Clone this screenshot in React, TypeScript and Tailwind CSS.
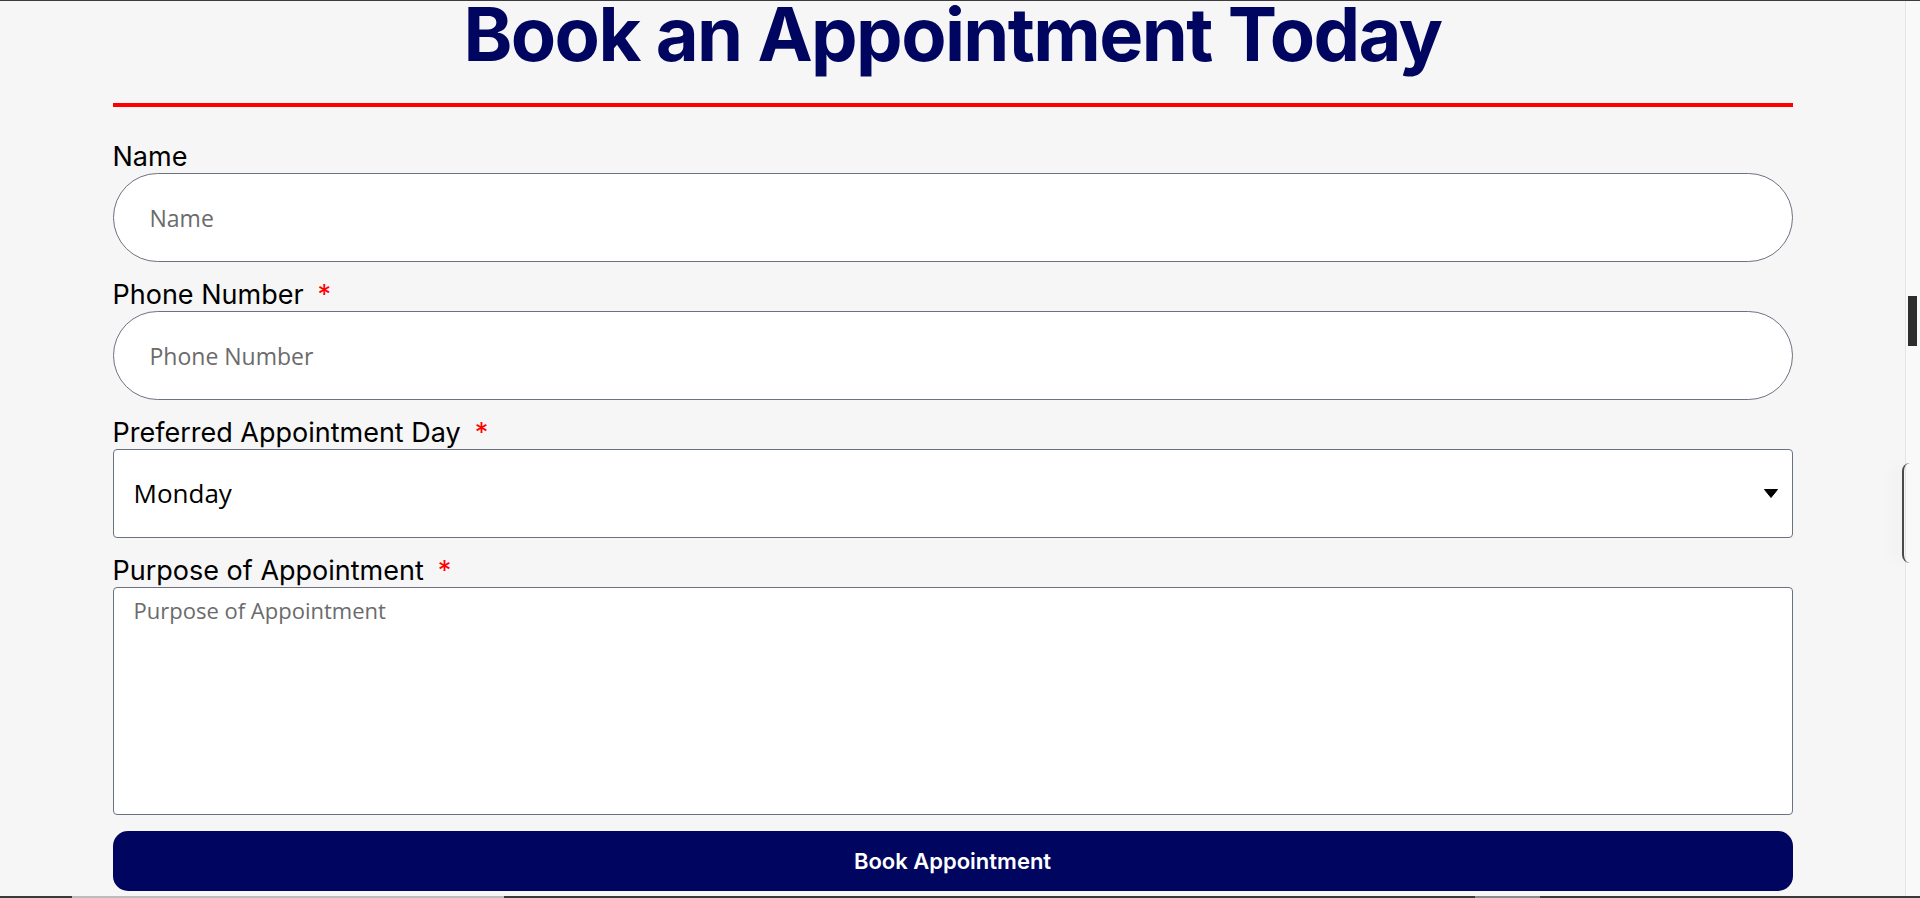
import { useState } from "react";

const DAYS = ["Monday", "Tuesday", "Wednesday", "Thursday", "Friday", "Saturday"];

function FieldLabel({ text, required }: { text: string; required?: boolean }) {
  return (
    <label className="block text-[27px] leading-[32px] text-black font-['Inter',sans-serif]">
      {text}
      {required && <span className="ml-[14px] text-[#ff0000]">*</span>}
    </label>
  );
}

export default function App() {
  const [day, setDay] = useState("Monday");

  return (
    <div className="h-[898px] flex flex-col bg-[#f6f6f6] overflow-hidden">
      <div className="h-px bg-[#3c3c3c]" />

      <div className="flex flex-1 min-h-0 relative">
        <main className="flex-1">
          <div className="w-[1680px] mx-auto">
            <h1 className="text-center text-[74px] leading-[66px] tracking-[-1.6px] font-bold text-[#00065f] font-['Inter',sans-serif]">
              Book an Appointment Today
            </h1>
            <div className="mt-[36px] h-[4px] bg-[#ff0000]" />

            <form className="mt-[34px] flex flex-col" onSubmit={(event) => event.preventDefault()}>
              <div className="flex flex-col gap-[17px]">
                <div>
                  <FieldLabel text="Name" />
                  <input
                    className="block h-[89px] w-full rounded-full border border-[#6b7280] bg-white pl-9 pr-9 text-[23px] text-black outline-none font-['Open_Sans',sans-serif] placeholder:text-[#6b6b6b]"
                    placeholder="Name"
                  />
                </div>

                <div>
                  <FieldLabel text="Phone Number" required />
                  <input
                    className="block h-[89px] w-full rounded-full border border-[#6b7280] bg-white pl-9 pr-9 text-[23px] text-black outline-none font-['Open_Sans',sans-serif] placeholder:text-[#6b6b6b]"
                    placeholder="Phone Number"
                  />
                </div>

                <div>
                  <FieldLabel text="Preferred Appointment Day" required />
                  <div className="relative">
                    <select
                      className="block h-[89px] w-full appearance-none rounded-[4px] border border-[#6b7280] bg-white pl-5 pr-12 text-[26px] text-black outline-none font-['Open_Sans',sans-serif]"
                      value={day}
                      onChange={(event) => setDay(event.target.value)}
                    >
                      {DAYS.map((d) => (
                        <option key={d} value={d}>
                          {d}
                        </option>
                      ))}
                    </select>
                    <svg
                      viewBox="0 0 14 9"
                      className="pointer-events-none absolute right-[15px] top-[40px] w-[14px] h-[9px]"
                    >
                      <path d="M0.5 0.5L13.5 0.5L7 8.5Z" fill="#000" stroke="#000" strokeLinejoin="round" />
                    </svg>
                  </div>
                </div>

                <div>
                  <FieldLabel text="Purpose of Appointment" required />
                  <textarea
                    className="block h-[228px] w-full resize-none rounded-[4px] border border-[#6b7280] bg-white px-5 pt-[7px] text-[22px] leading-[30px] text-black outline-none font-['Open_Sans',sans-serif] placeholder:text-[#6b6b6b]"
                    placeholder="Purpose of Appointment"
                  />
                </div>
              </div>

              <button
                type="submit"
                className="mt-4 h-[60px] w-full rounded-[15px] bg-[#00065f] text-[22px] font-semibold text-white font-['Inter',sans-serif]"
              >
                Book Appointment
              </button>
            </form>
          </div>
        </main>

        <div className="absolute left-[1902px] top-[462px] h-[100px] w-[8px] rounded-l-[10px] border-l-2 border-[#4a4a4a] shadow-[-8px_0_16px_rgba(0,0,0,0.04)]" />

        <div className="w-[15px] border-l border-[#e4e4e4] bg-[#f9f9f9]">
          <div className="ml-[2px] mt-[295px] h-[50px] w-[9px] bg-[#2d2d2d]" />
        </div>
      </div>

      <div className="h-[2px] flex">
        <div className="w-[72px] bg-[#3a3a3a]" />
        <div className="w-[432px] bg-[#bdbdbd]" />
        <div className="w-[971px] bg-[#3a3a3a]" />
        <div className="w-[65px] bg-[#8a8a8a]" />
        <div className="flex-1 bg-[#3a3a3a]" />
      </div>
    </div>
  );
}
